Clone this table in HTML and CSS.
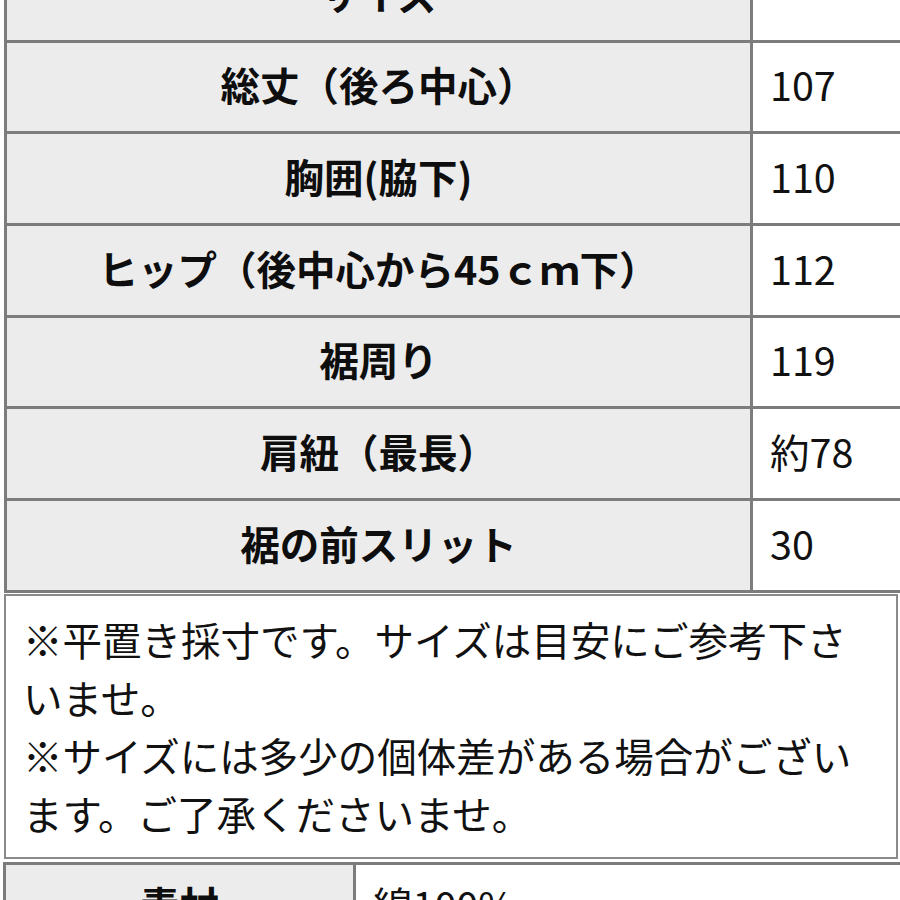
FILE: index.html
```html
<!DOCTYPE html>
<html lang="ja">
<head>
<meta charset="utf-8">
<title>サイズ表</title>
<link rel="stylesheet" href="styles.css">
</head>
<body>
<div class="page">
  <div class="sizes">
    <div class="k">サイズ</div><div class="v"></div>
    <div class="k">総丈（後ろ中心）</div><div class="v">107</div>
    <div class="k">胸囲(脇下)</div><div class="v">110</div>
    <div class="k">ヒップ（後中心から45ｃｍ下）</div><div class="v">112</div>
    <div class="k">裾周り</div><div class="v">119</div>
    <div class="k">肩紐（最長）</div><div class="v">約78</div>
    <div class="k">裾の前スリット</div><div class="v">30</div>
  </div>
  <div class="notes">
    <p>※平置き採寸です。サイズは目安にご参考下さいませ。</p>
    <p>※サイズには多少の個体差がある場合がございます。ご了承くださいませ。</p>
  </div>
  <div class="material">
    <div class="k">素材</div><div class="v">綿100%</div>
  </div>
</div>
</body>
</html>
```

FILE: styles.css
```css
html, body {
  margin: 0;
  padding: 0;
  background: #ffffff;
  overflow: hidden;
}

body {
  width: 900px;
  height: 900px;
  font-family: "Noto Sans CJK JP", "Noto Sans", sans-serif;
  color: #111111;
  font-size: 39.5px;
}

.page {
  padding-left: 4px;
}

.sizes {
  display: grid;
  grid-template-columns: 746px 160px;
  grid-auto-rows: 91.67px;
  margin-top: -49px;
  border-left: 3px solid #7c7c7c;
  width: 906px;
}

.sizes .k,
.sizes .v,
.material .k,
.material .v {
  box-sizing: border-box;
  border-bottom: 3px solid #7c7c7c;
  display: flex;
  align-items: center;
}

.sizes .k,
.sizes .v {
  padding-bottom: 6px;
}

.k {
  background: #ececec;
  border-right: 3px solid #7c7c7c;
  justify-content: center;
  font-weight: 700;
  color: #0e0e0e;
}

.v {
  background: #ffffff;
  padding-left: 17px;
  font-weight: 400;
}

.notes {
  box-sizing: border-box;
  width: 894px;
  margin-top: 1px;
  border: 2px solid #8a8a8a;
  padding: 14px 10px 14px 17px;
  line-height: 58.3px;
}

.notes p {
  margin: 0;
}

.material {
  display: grid;
  grid-template-columns: 350px 560px;
  grid-auto-rows: 80px;
  margin-top: 3px;
  border-top: 3px solid #7c7c7c;
  border-left: 3px solid #7c7c7c;
  margin-left: -1px;
  width: 910px;
}
```
